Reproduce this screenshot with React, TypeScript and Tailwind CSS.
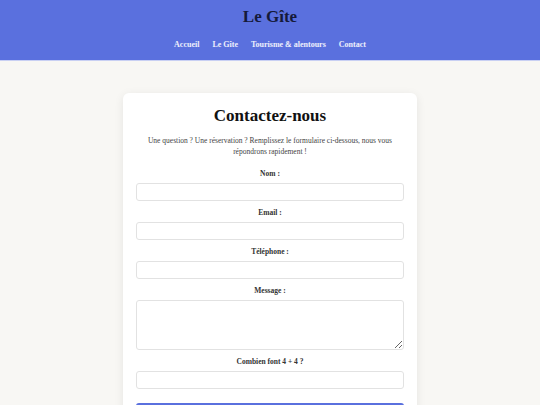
const fields = [
  { label: 'Nom :', type: 'text' },
  { label: 'Email :', type: 'email' },
  { label: 'Téléphone :', type: 'tel' },
];

const labelCls = 'text-center text-[7.5px] font-bold text-[#333] leading-[10px] mb-[4px]';
const inputCls = 'h-[18px] border border-[#e2e2e2] rounded-[3px] bg-white';

export default function App() {
  return (
    <div className="min-h-[405px] bg-[#f8f7f4] font-['Liberation_Serif',Georgia,serif] text-[#222]">
      <header className="h-[61px] bg-[#5a70de] border-b border-[#c9d0f3] flex flex-col items-center">
        <h1 className="mt-[7px] text-[17px] font-bold text-[#151a3a] leading-[20px]">Le Gîte</h1>
        <nav className="mt-[13px] flex gap-[13px] text-[8px] font-bold text-white/90 leading-[10px]">
          <a>Accueil</a>
          <a>Le Gîte</a>
          <a>Tourisme &amp; alentours</a>
          <a>Contact</a>
        </nav>
      </header>

      <main className="flex justify-center pt-[32px]">
        <div className="w-[294px] bg-white rounded-[6px] shadow-[0_2px_10px_rgba(0,0,0,0.08)] px-[13px] pt-[12px] pb-[20px]">
          <h2 className="text-center text-[17px] font-bold text-[#111] leading-[22px]">Contactez-nous</h2>
          <p className="mt-[8px] text-center text-[7.5px] leading-[11px] text-[#444] px-[10px]">
            Une question ? Une réservation ? Remplissez le formulaire ci-dessous, nous vous répondrons rapidement !
          </p>
          <form className="mt-[12px] flex flex-col">
            {fields.map((f) => (
              <div key={f.label} className="flex flex-col mb-[7px]">
                <label className={labelCls}>{f.label}</label>
                <input type={f.type} className={inputCls} />
              </div>
            ))}
            <div className="flex flex-col mb-[7px]">
              <label className={labelCls}>Message :</label>
              <textarea className="h-[50px] border border-[#e2e2e2] rounded-[3px] bg-white resize-y" />
            </div>
            <div className="flex flex-col mb-[14px]">
              <label className={labelCls}>Combien font 4 + 4 ?</label>
              <input type="text" className={inputCls} />
            </div>
            <button type="button" className="h-[20px] rounded-[3px] bg-[#5a70de] text-white text-[8px] font-bold">Envoyer</button>
          </form>
        </div>
      </main>
    </div>
  );
}
